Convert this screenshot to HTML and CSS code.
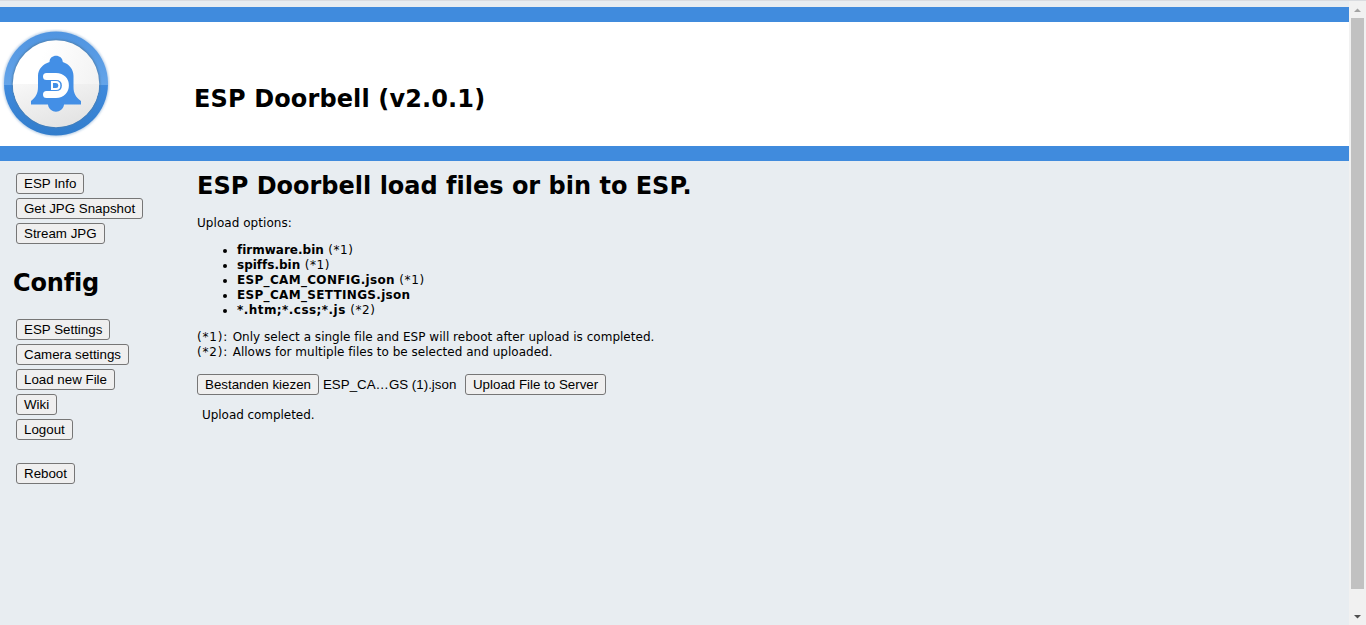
FILE: index.html
```html
<!DOCTYPE html>
<html lang="en">
<head>
<meta charset="utf-8">
<title>ESP Doorbell</title>
<link rel="stylesheet" href="styles.css">
</head>
<body>
<div class="page">
  <header class="banner">
    <svg class="logo" viewBox="0 0 110 110">
      <defs>
        <linearGradient id="gloss" x1="0" y1="0" x2="1" y2=".4"><stop offset=".35" stop-color="#fff"/><stop offset="1" stop-color="#f3f3f3"/></linearGradient>
        <linearGradient id="shade" x1="0" y1="0" x2=".7" y2="1"><stop offset="0" stop-color="#f8f8f8"/><stop offset="1" stop-color="#e2e2e2"/></linearGradient>
        <linearGradient id="ring" x1="0" y1="0" x2="0" y2="1"><stop offset="0" stop-color="#4f94e0"/><stop offset=".51" stop-color="#64a4e9"/><stop offset=".51" stop-color="#3f8add"/><stop offset="1" stop-color="#327dcc"/></linearGradient>
        <filter id="soft" x="-10%" y="-10%" width="120%" height="120%"><feGaussianBlur stdDeviation="1"/></filter>
      </defs>
      <circle cx="56" cy="54.500" r="53" fill="#b9cfe6" filter="url(#soft)"/>
      <circle cx="56" cy="54.500" r="52" fill="url(#ring)"/>
      <circle cx="56" cy="54.500" r="44" fill="#4c7dab" filter="url(#soft)"/>
      <circle cx="56" cy="54.500" r="43.200" fill="url(#gloss)"/>
      <path d="M12.800 55h86.400a43.200 43.200 0 0 1-86.400 0z" fill="url(#shade)"/>
      <path class="blue" d="M49.500 33c0-8.500 13-8.500 13.300 0C69 35 73.500 40 73.500 47v11c0 6 2 10 7.500 14v3.500H64c-1 9.500-15 9.500-16 0H31V72c5-4 7-8 7-14V47c0-7 5-12 11.500-14z"/>
      <path class="mark" d="M46.500 47.400H56c12.500 0 12.500 18 0 18h-9.500"/>
      <path class="mark-center" d="M52 52.900h4c4.500 0 4.500 7 0 7h-4z"/>
    </svg>
    <h1 class="title">ESP Doorbell (v2.0.1)</h1>
  </header>
  <div class="columns">
    <nav class="menu">
      <button>ESP Info</button>
      <button>Get JPG Snapshot</button>
      <button>Stream JPG</button>
      <h2 class="menu-title">Config</h2>
      <button>ESP Settings</button>
      <button>Camera settings</button>
      <button>Load new File</button>
      <button>Wiki</button>
      <button>Logout</button>
      <button class="reboot">Reboot</button>
    </nav>
    <main class="content">
      <h2 class="heading">ESP Doorbell load files or bin to ESP.</h2>
      <p class="intro">Upload options:</p>
      <ul class="options">
        <li><b>firmware.bin</b> (*1)</li>
        <li><b>spiffs.bin</b> (*1)</li>
        <li><b class="caps">ESP_CAM_CONFIG.json</b> (*1)</li>
        <li><b class="caps">ESP_CAM_SETTINGS.json</b></li>
        <li><b class="globs">*.htm;*.css;*.js</b> (*2)</li>
      </ul>
      <p class="notes"><span class="mark-ref">(*1): </span>Only select a single file and ESP will reboot after upload is completed.<br><span class="mark-ref">(*2): </span>Allows for multiple files to be selected and uploaded.</p>
      <div class="upload">
        <button>Bestanden kiezen</button>
        <span class="file">ESP_CA…GS (1).json</span>
        <button>Upload File to Server</button>
      </div>
      <p class="status">Upload completed.</p>
    </main>
  </div>
</div>
<div class="scrollbar">
  <svg class="arrow" viewBox="0 0 17 17"><path fill="#a3a3a3" d="M5 11h7L8.500 7.500z"/></svg>
  <div class="thumb"></div>
  <svg class="arrow" viewBox="0 0 17 17"><path fill="#505050" d="M5 7h7L8.500 10.500z"/></svg>
</div>
</body>
</html>
```
FILE: styles.css
```css
* { box-sizing: border-box; }
body {
  margin: 0;
  height: 625px;
  overflow: hidden;
  display: flex;
  border-top: 1px solid #dadce0;
  background: #e8edf1;
  font: 12px/15px Verdana, "DejaVu Sans", sans-serif;
  font-variant-ligatures: none;
  color: #000;
}
.page { flex: 1; padding-top: 6px; }
.banner {
  display: flex;
  height: 154px;
  border: solid #408bdd;
  border-width: 15px 0;
  background: #fff;
}
.logo { width: 110px; height: 110px; margin-top: 7px; }
.blue { fill: #438fe6; }
.mark { fill: none; stroke: #fff; stroke-width: 7; stroke-linecap: round; }
.mark-center { fill: #438fe6; stroke: #fff; stroke-width: 2; }
h1, h2 { margin: 0; font-weight: bold; font-size: 24px; line-height: 30px; white-space: nowrap; }
.title { margin: 62px 0 0 84px; letter-spacing: 0.13px; }
.columns { display: flex; }
.menu {
  width: 197px;
  padding: 12px 0 0 16px;
  display: flex;
  flex-direction: column;
  align-items: flex-start;
  gap: 4px;
}
button {
  height: 21px;
  padding: 0 7px;
  border: 1px solid #767676;
  border-radius: 3px;
  background: #efefef;
  color: #000;
  font: 13.333px/19px "Liberation Sans", Arial, sans-serif;
  white-space: nowrap;
}
.menu-title { margin: 20px 0 17px -3px; letter-spacing: -0.15px; }
.reboot { margin-top: 19px; }
.content { padding-top: 10px; }
.intro { margin: 15px 0 12px; letter-spacing: 0.05px; }
.options { margin: 0 0 12px; padding-left: 40px; }
.options li { letter-spacing: 0.6px; }
.options b { letter-spacing: 0; }
.options .caps { letter-spacing: 0.32px; }
.options .globs { letter-spacing: 0.45px; }
.notes { margin: 0 0 14px; letter-spacing: 0.02px; }
.mark-ref { letter-spacing: 0.8px; }
.upload {
  display: flex;
  align-items: center;
  font: 13.333px/21px "Liberation Sans", Arial, sans-serif;
}
.file { width: 142px; margin-left: 4px; white-space: nowrap; }
.status { margin: 13px 0 0 5px; letter-spacing: -0.05px; }
.scrollbar {
  width: 17px;
  display: flex;
  flex-direction: column;
  background: #f1f1f1;
}
.arrow { width: 17px; height: 17px; }
.thumb { height: 571px; margin: 0 2px; background: #c1c1c1; }
.thumb + .arrow { margin-top: 19px; }
```
